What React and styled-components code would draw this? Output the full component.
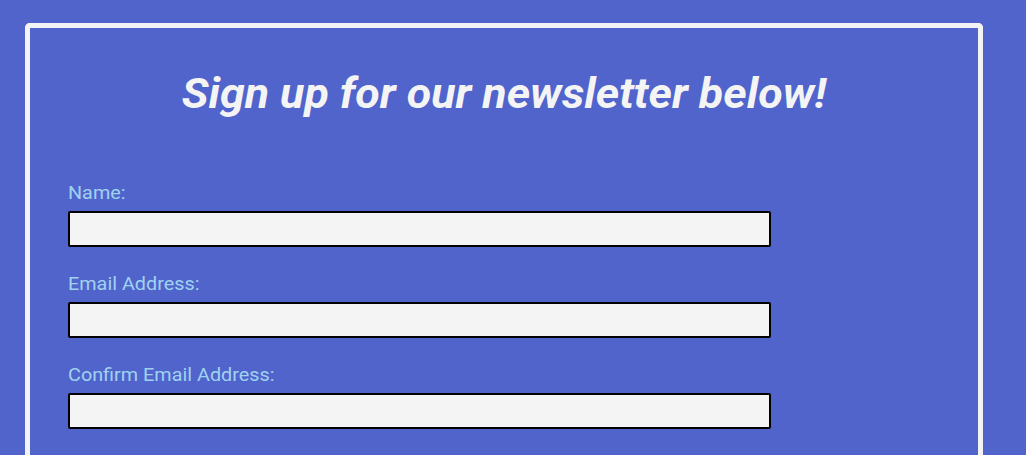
import React from 'react';
import styled, { createGlobalStyle } from 'styled-components';

const GlobalStyle = createGlobalStyle`
  html, body {
    margin: 0;
    padding: 0;
    background: #5064cc;
    font-family: Roboto, "Liberation Sans", sans-serif;
  }
`;

const Page = styled.div`
  padding: 23px 0 0 25px;
`;

const Card = styled.div`
  width: 958px;
  box-sizing: border-box;
  border: 5px solid #f4f4f4;
  border-bottom: none;
  border-radius: 5px 5px 0 0;
  padding: 42px 38px 40px;
`;

// the type in this design runs a little wide, hence the scaleX
const Title = styled.h1`
  margin: 0 0 64px;
  text-align: center;
  font-size: 42px;
  line-height: 48px;
  font-style: italic;
  font-weight: 700;
  color: #f4f4f4;
  transform: scaleX(1.065);
`;

const Form = styled.form`
  display: flex;
  flex-direction: column;
  gap: 26px;
`;

const Field = styled.div`
  display: flex;
  flex-direction: column;
  gap: 8px;
`;

const Label = styled.label`
  font-size: 18px;
  line-height: 21px;
  color: #a0d2f0;
  transform: scaleX(1.1);
  transform-origin: left center;
`;

const Input = styled.input`
  width: 703px;
  height: 36px;
  box-sizing: border-box;
  border: 2px solid #000;
  border-radius: 2px;
  background: #f4f4f4;
  font-size: 16px;
  padding: 0 8px;
  outline: none;
`;

const fields = [
  { id: 'name', label: 'Name:', type: 'text' },
  { id: 'email', label: 'Email Address:', type: 'email' },
  { id: 'confirm', label: 'Confirm Email Address:', type: 'email' },
];

const App = () => {
  return (
    <>
      <GlobalStyle />
      <Page>
        <Card>
          <Title>Sign up for our newsletter below!</Title>
          <Form onSubmit={(e) => e.preventDefault()}>
            {fields.map((f) => (
              <Field key={f.id}>
                <Label htmlFor={f.id}>{f.label}</Label>
                <Input id={f.id} type={f.type} />
              </Field>
            ))}
          </Form>
        </Card>
      </Page>
    </>
  );
};

export default App;
